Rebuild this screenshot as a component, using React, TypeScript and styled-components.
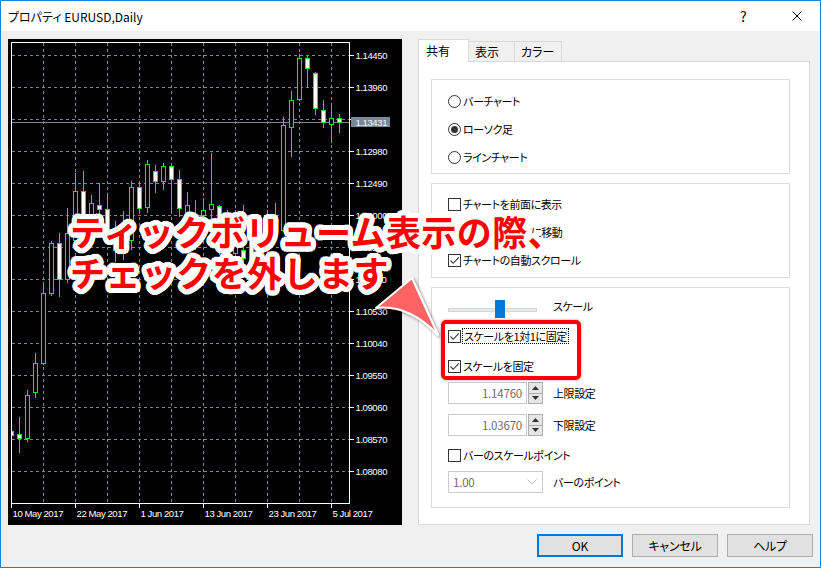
import React from "react"
import styled, { createGlobalStyle } from "styled-components"

const UI_FONT = `"Noto Sans CJK JP", "Noto Sans", sans-serif`
const CHART_FONT = `"Liberation Sans", Arial, sans-serif`

const GlobalStyle = createGlobalStyle`
  html, body { margin: 0; padding: 0; background: #fff; }
  body { font-family: ${UI_FONT}; }
  * { box-sizing: border-box; }
`

const Window = styled.div`
  position: relative;
  width: 821px;
  height: 568px;
  border: 1px solid #1883d7;
  display: flex;
  flex-direction: column;
  background: #f0f0f0;
  overflow: hidden;
  font-family: ${UI_FONT};
  font-size: 11px;
  letter-spacing: -0.4px;
  font-feature-settings: "palt" 1;
  color: #000;
`

const TitleBar = styled.div`
  height: 30px;
  flex-shrink: 0;
  background: #fff;
  display: flex;
  align-items: center;
  padding-left: 7px;
`

const Title = styled.div`
  flex: 1;
  font-size: 12px;
  letter-spacing: 0;
`

const TitleButton = styled.div<{ $gap?: number }>`
  width: 46px;
  height: 30px;
  margin-right: ${(p) => p.$gap ?? 0}px;
  display: flex;
  align-items: center;
  justify-content: center;
  font-size: 14px;
`

const Body = styled.div`
  flex: 1;
  padding: 8px 7px 0 7px;
  display: flex;
  flex-direction: column;
`

const Main = styled.div`
  display: flex;
  gap: 16px;
  height: 486px;
`

const ChartBox = styled.div`
  width: 394px;
  height: 486px;
  flex-shrink: 0;
  background: #000;
  svg {
    display: block;
  }
`

const TabControl = styled.div`
  width: 392px;
  display: flex;
  flex-direction: column;
`

const TabStrip = styled.div`
  display: flex;
  height: 22px;
  align-items: flex-end;
`

const Tab = styled.div<{ $active?: boolean; $w: number }>`
  width: ${(p) => p.$w}px;
  height: ${(p) => (p.$active ? 23 : 20)}px;
  margin-bottom: ${(p) => (p.$active ? -1 : 0)}px;
  margin-left: ${(p) => (p.$active ? 0 : -1)}px;
  position: relative;
  z-index: ${(p) => (p.$active ? 2 : 1)};
  background: ${(p) => (p.$active ? "#fff" : "#f0f0f0")};
  border: 1px solid #d9d9d9;
  border-bottom: none;
  padding-left: ${(p) => (p.$active ? 7 : 6)}px;
  padding-top: ${(p) => (p.$active ? 2 : 1)}px;
  font-size: 12px;
  letter-spacing: 0;
  &:first-child {
    margin-left: 0;
  }
`

const TabPanel = styled.div`
  flex: 1;
  background: #fff;
  border: 1px solid #d9d9d9;
  padding: 17px 19px 0 12px;
  display: flex;
  flex-direction: column;
  gap: 9px;
`

const Group = styled.div<{ $pt: number; $pb: number }>`
  border: 1px solid #dcdcdc;
  padding: ${(p) => p.$pt}px 0 ${(p) => p.$pb}px 16px;
  display: flex;
  flex-direction: column;
`

const Row = styled.div<{ $h: number; $mt?: number }>`
  height: ${(p) => p.$h}px;
  margin-top: ${(p) => p.$mt ?? 0}px;
  display: flex;
  align-items: center;
`

const RadioCircle = styled.span<{ $on?: boolean }>`
  width: 13px;
  height: 13px;
  border: 1px solid #333;
  border-radius: 50%;
  background: #fff;
  flex-shrink: 0;
  &::after {
    content: "";
    display: ${(p) => (p.$on ? "block" : "none")};
    width: 7px;
    height: 7px;
    margin: 2px;
    border-radius: 50%;
    background: #333;
  }
`

const CheckSquare = styled.span`
  width: 13px;
  height: 13px;
  border: 1px solid #333;
  background: #fff;
  flex-shrink: 0;
  display: flex;
  align-items: center;
  justify-content: center;
`

const Label = styled.span<{ $focus?: boolean }>`
  margin-left: ${(p) => (p.$focus ? 1 : 2)}px;
  padding: 0 ${(p) => (p.$focus ? 1 : 0)}px;
  border: ${(p) => (p.$focus ? "1px dotted #000" : "none")};
  line-height: 14px;
  margin-top: -1px;
  white-space: nowrap;
`

const SideLabel = styled.span<{ $ml: number; $up?: number }>`
  margin-left: ${(p) => p.$ml}px;
  margin-bottom: ${(p) => p.$up ?? 1}px;
  white-space: nowrap;
`

const SliderTrack = styled.div`
  position: relative;
  width: 89px;
  height: 4px;
  margin-top: 2px;
  background: #e7eaea;
  border: 1px solid #d6d6d6;
`

const SliderThumb = styled.div`
  position: absolute;
  left: 46px;
  top: -9px;
  width: 10px;
  height: 18px;
  background: #0078d7;
`

const SpinInput = styled.div`
  width: 79px;
  height: 22px;
  border: 1px solid #cccccc;
  background: #fff;
  color: #6d6d6d;
  display: flex;
  align-items: center;
  justify-content: flex-end;
  padding-right: 4px;
  font-size: 11.5px;
  letter-spacing: -0.2px;
`

const SpinButtons = styled.div`
  margin-left: 1px;
  width: 15px;
  height: 22px;
  display: flex;
  flex-direction: column;
`

const SpinButton = styled.div`
  flex: 1;
  border: 1px solid #adadad;
  background: #e5e5e5;
  display: flex;
  align-items: center;
  justify-content: center;
  & + & {
    border-top: none;
  }
`

const Combo = styled.div`
  width: 95px;
  height: 22px;
  border: 1px solid #cccccc;
  background: #fff;
  color: #6d6d6d;
  display: flex;
  align-items: center;
  justify-content: space-between;
  padding: 0 5px 0 4px;
  font-size: 11.5px;
  letter-spacing: -0.2px;
`

const ButtonRow = styled.div`
  margin-top: 9px;
  display: flex;
  justify-content: flex-end;
  gap: 9px;
`

const DialogButton = styled.div<{ $primary?: boolean }>`
  width: 86px;
  height: 23px;
  background: #e1e1e1;
  border: ${(p) => (p.$primary ? "2px solid #0078d7" : "1px solid #adadad")};
  display: flex;
  align-items: center;
  justify-content: center;
  font-size: 12px;
  letter-spacing: -0.2px;
`

const outline = (r: number, color: string, steps: number) =>
  Array.from({ length: steps }, (_, i) => {
    const a = (i / steps) * Math.PI * 2
    return `${(Math.cos(a) * r).toFixed(2)}px ${(Math.sin(a) * r).toFixed(2)}px 0 ${color}`
  }).join(", ")

const Callout = styled.div`
  position: absolute;
  left: 69px;
  top: 209px;
  font-family: "Noto Sans CJK JP", sans-serif;
  font-weight: 700;
  font-size: 35px;
  line-height: 41px;
  letter-spacing: 0.45px;
  color: #ff0000;
  white-space: nowrap;
  font-feature-settings: normal;
  text-shadow: ${outline(2.5, "#fff", 16)}, ${outline(5, "#fff", 32)},
    1px 1px 5px rgba(0, 0, 0, 0.55);
`

const ArrowMark = styled.svg`
  position: absolute;
  left: 360px;
  top: 265px;
  overflow: visible;
`

const Highlight = styled.div`
  position: absolute;
  left: 440px;
  top: 319px;
  width: 140px;
  height: 60px;
  border: 4px solid #ff0000;
  border-radius: 5px;
  box-shadow: 0 0 3px rgba(0, 0, 0, 0.35);
`

// [high, low, bodyTop, bodyBottom, bear]
const candles: [number, number, number, number, number][] = [
  [430, 437, 431, 435, 1],
  [417, 453, 434, 438, 1],
  [390, 442, 395, 438, 0],
  [353, 398, 363, 392, 0],
  [282, 365, 293, 363, 0],
  [241, 296, 243, 293, 0],
  [233, 297, 243, 279, 1],
  [208, 283, 233, 279, 0],
  [173, 245, 191, 240, 0],
  [171, 230, 191, 217, 1],
  [195, 240, 203, 225, 0],
  [183, 232, 205, 209, 1],
  [193, 242, 209, 235, 1],
  [221, 262, 232, 250, 0],
  [211, 260, 225, 248, 0],
  [181, 250, 187, 240, 0],
  [182, 213, 187, 208, 1],
  [160, 213, 164, 207, 0],
  [165, 193, 171, 181, 1],
  [163, 190, 166, 181, 0],
  [163, 213, 166, 179, 1],
  [170, 217, 179, 208, 1],
  [192, 240, 205, 225, 0],
  [200, 250, 215, 240, 1],
  [198, 240, 210, 215, 0],
  [153, 235, 204, 209, 0],
  [205, 255, 206, 240, 1],
  [210, 258, 222, 253, 0],
  [210, 262, 230, 253, 0],
  [205, 265, 250, 258, 1],
  [225, 270, 238, 262, 1],
  [215, 260, 232, 250, 0],
  [210, 255, 220, 245, 0],
  [203, 240, 215, 232, 1],
  [117, 232, 125, 230, 0],
  [91, 157, 100, 127, 0],
  [54, 101, 58, 99, 0],
  [55, 88, 58, 68, 1],
  [72, 115, 73, 108, 1],
  [100, 128, 110, 122, 1],
  [103, 143, 118, 124, 0],
  [114, 133, 118, 122, 1],
]

const prices = [
  "1.14450", "1.13960", "1.13470", "1.12980", "1.12490", "1.12000", "1.11510",
  "1.11020", "1.10530", "1.10040", "1.09550", "1.09060", "1.08570", "1.08080",
]

const dates: [number, string][] = [
  [11.5, "10 May 2017"],
  [75.5, "22 May 2017"],
  [139.5, "1 Jun 2017"],
  [203.5, "13 Jun 2017"],
  [267.5, "23 Jun 2017"],
  [331.5, "5 Jul 2017"],
]

const GRID = "#778899"

const AxisText = (props: { x: number; y: number; fill?: string; children: string }) => (
  <text x={props.x} y={props.y} fill={props.fill ?? "#fff"} fontFamily={CHART_FONT}
    fontSize={9.6} letterSpacing={-0.45}>{props.children}</text>
)

const Chart = () => (
  <ChartBox>
    <svg width={394} height={486} viewBox="8 39 394 486">
      <defs>
        <clipPath id="plot">
          <rect x={12} y={43} width={337} height={460} />
        </clipPath>
      </defs>
      {Array.from({ length: 10 }, (_, i) => (
        <line key={"v" + i} x1={43.5 + 32 * i} x2={43.5 + 32 * i} y1={43} y2={503}
          stroke={GRID} strokeDasharray="3 3" />
      ))}
      {prices.map((_, j) => (
        <line key={"h" + j} x1={12} x2={349} y1={55.5 + 32 * j} y2={55.5 + 32 * j}
          stroke={GRID} strokeDasharray="3 3" />
      ))}
      <line x1={12} x2={349} y1={122.5} y2={122.5} stroke={GRID} />
      <g clipPath="url(#plot)">
        {candles.map(([hi, lo, top, bot, bear], k) => {
          const c = 11.5 + 8 * k
          return (
            <g key={k}>
              <line x1={c} x2={c} y1={hi} y2={lo} stroke="#00ff00" />
              <rect x={c - 2} y={top + 0.5} width={4} height={Math.max(bot - top, 1)}
                fill={bear ? "#fff" : "#000"} stroke="#00ff00" />
            </g>
          )
        })}
      </g>
      <rect x={11.5} y={42.5} width={338} height={461} fill="none" stroke="#fff" />
      {prices.map((p, j) => (
        <g key={"p" + j}>
          <line x1={349.5} x2={354} y1={55.5 + 32 * j} y2={55.5 + 32 * j} stroke="#fff" />
          <AxisText x={355.5} y={59 + 32 * j}>{p}</AxisText>
        </g>
      ))}
      <rect x={351} y={117} width={39} height={10} fill="#778899" />
      <AxisText x={355.5} y={126} fill="#f4f6f8">1.13431</AxisText>
      {dates.map(([x, d]) => (
        <g key={d}>
          <line x1={x} x2={x} y1={503} y2={508} stroke="#fff" />
          <AxisText x={x + 1} y={517}>{d}</AxisText>
        </g>
      ))}
    </svg>
  </ChartBox>
)

const Tick = () => (
  <svg width="11" height="11" viewBox="0 0 11 11">
    <polyline points="1.5,5.5 4.2,8.3 9.8,2.4" fill="none" stroke="#333" strokeWidth="1.1" />
  </svg>
)

const Check = ({ on, label, focus }: { on?: boolean; label: string; focus?: boolean }) => (
  <>
    <CheckSquare>{on && <Tick />}</CheckSquare>
    <Label $focus={focus}>{label}</Label>
  </>
)

const Radio = ({ on, label }: { on?: boolean; label: string }) => (
  <>
    <RadioCircle $on={on} />
    <Label>{label}</Label>
  </>
)

const Spin = ({ value, label }: { value: string; label: string }) => (
  <>
    <SpinInput>{value}</SpinInput>
    <SpinButtons>
      <SpinButton>
        <svg width="7" height="4" viewBox="0 0 7 4"><polygon points="0,4 7,4 3.5,0" fill="#333" /></svg>
      </SpinButton>
      <SpinButton>
        <svg width="7" height="4" viewBox="0 0 7 4"><polygon points="0,0 7,0 3.5,4" fill="#333" /></svg>
      </SpinButton>
    </SpinButtons>
    <SideLabel $ml={10}>{label}</SideLabel>
  </>
)

export default function App() {
  return (
    <>
      <GlobalStyle />
      <Window>
        <TitleBar>
          <Title>プロパティ EURUSD,Daily</Title>
          <TitleButton $gap={8}>?</TitleButton>
          <TitleButton>
            <svg width="10" height="10" viewBox="0 0 10 10">
              <path d="M0.5 0.5 L9.5 9.5 M9.5 0.5 L0.5 9.5" stroke="#000" strokeWidth="1" />
            </svg>
          </TitleButton>
        </TitleBar>
        <Body>
          <Main>
            <Chart />
            <TabControl>
              <TabStrip>
                <Tab $active $w={51}>共有</Tab>
                <Tab $w={47}>表示</Tab>
                <Tab $w={48}>カラー</Tab>
              </TabStrip>
              <TabPanel>
                <Group $pt={7} $pb={2}>
                  <Row $h={28}><Radio label="バーチャート" /></Row>
                  <Row $h={28}><Radio on label="ローソク足" /></Row>
                  <Row $h={28}><Radio label="ラインチャート" /></Row>
                </Group>
                <Group $pt={6} $pb={2}>
                  <Row $h={28}><Check label="チャートを前面に表示" /></Row>
                  <Row $h={28}><Check on label="チャートの右端に移動" /></Row>
                  <Row $h={29}><Check on label="チャートの自動スクロール" /></Row>
                </Group>
                <Group $pt={8} $pb={13}>
                  <Row $h={26}>
                    <SliderTrack><SliderThumb /></SliderTrack>
                    <SideLabel $ml={16} $up={6}>スケール</SideLabel>
                  </Row>
                  <Row $h={29}><Check on focus label="スケールを1対1に固定" /></Row>
                  <Row $h={30}><Check on label="スケールを固定" /></Row>
                  <Row $h={24}><Spin value="1.14760" label="上限設定" /></Row>
                  <Row $h={24} $mt={8}><Spin value="1.03670" label="下限設定" /></Row>
                  <Row $h={28} $mt={4}><Check label="バーのスケールポイント" /></Row>
                  <Row $h={24} $mt={1}>
                    <Combo>
                      1.00
                      <svg width="10" height="6" viewBox="0 0 10 6">
                        <polyline points="0.5,0.5 5,5 9.5,0.5" fill="none" stroke="#bbb" />
                      </svg>
                    </Combo>
                    <SideLabel $ml={10}>バーのポイント</SideLabel>
                  </Row>
                </Group>
              </TabPanel>
            </TabControl>
          </Main>
          <ButtonRow>
            <DialogButton $primary>OK</DialogButton>
            <DialogButton>キャンセル</DialogButton>
            <DialogButton>ヘルプ</DialogButton>
          </ButtonRow>
        </Body>
        <Callout>
          ティックボリューム表示の際、
          <br />
          チェックを外します
        </Callout>
        <ArrowMark width={90} height={80} viewBox="360 265 90 80">
          <defs>
            <filter id="arrowShadow" x="-30%" y="-30%" width="160%" height="160%">
              <feDropShadow dx="1.5" dy="1.5" stdDeviation="1.5" floodColor="#000" floodOpacity="0.45" />
            </filter>
          </defs>
          <path d="M375 307 L411 277 L437 334 Q408 303 375 307 Z" fill="#ff6464"
            stroke="#fff" strokeWidth="2" strokeLinejoin="round" filter="url(#arrowShadow)" />
        </ArrowMark>
        <Highlight />
      </Window>
    </>
  )
}
